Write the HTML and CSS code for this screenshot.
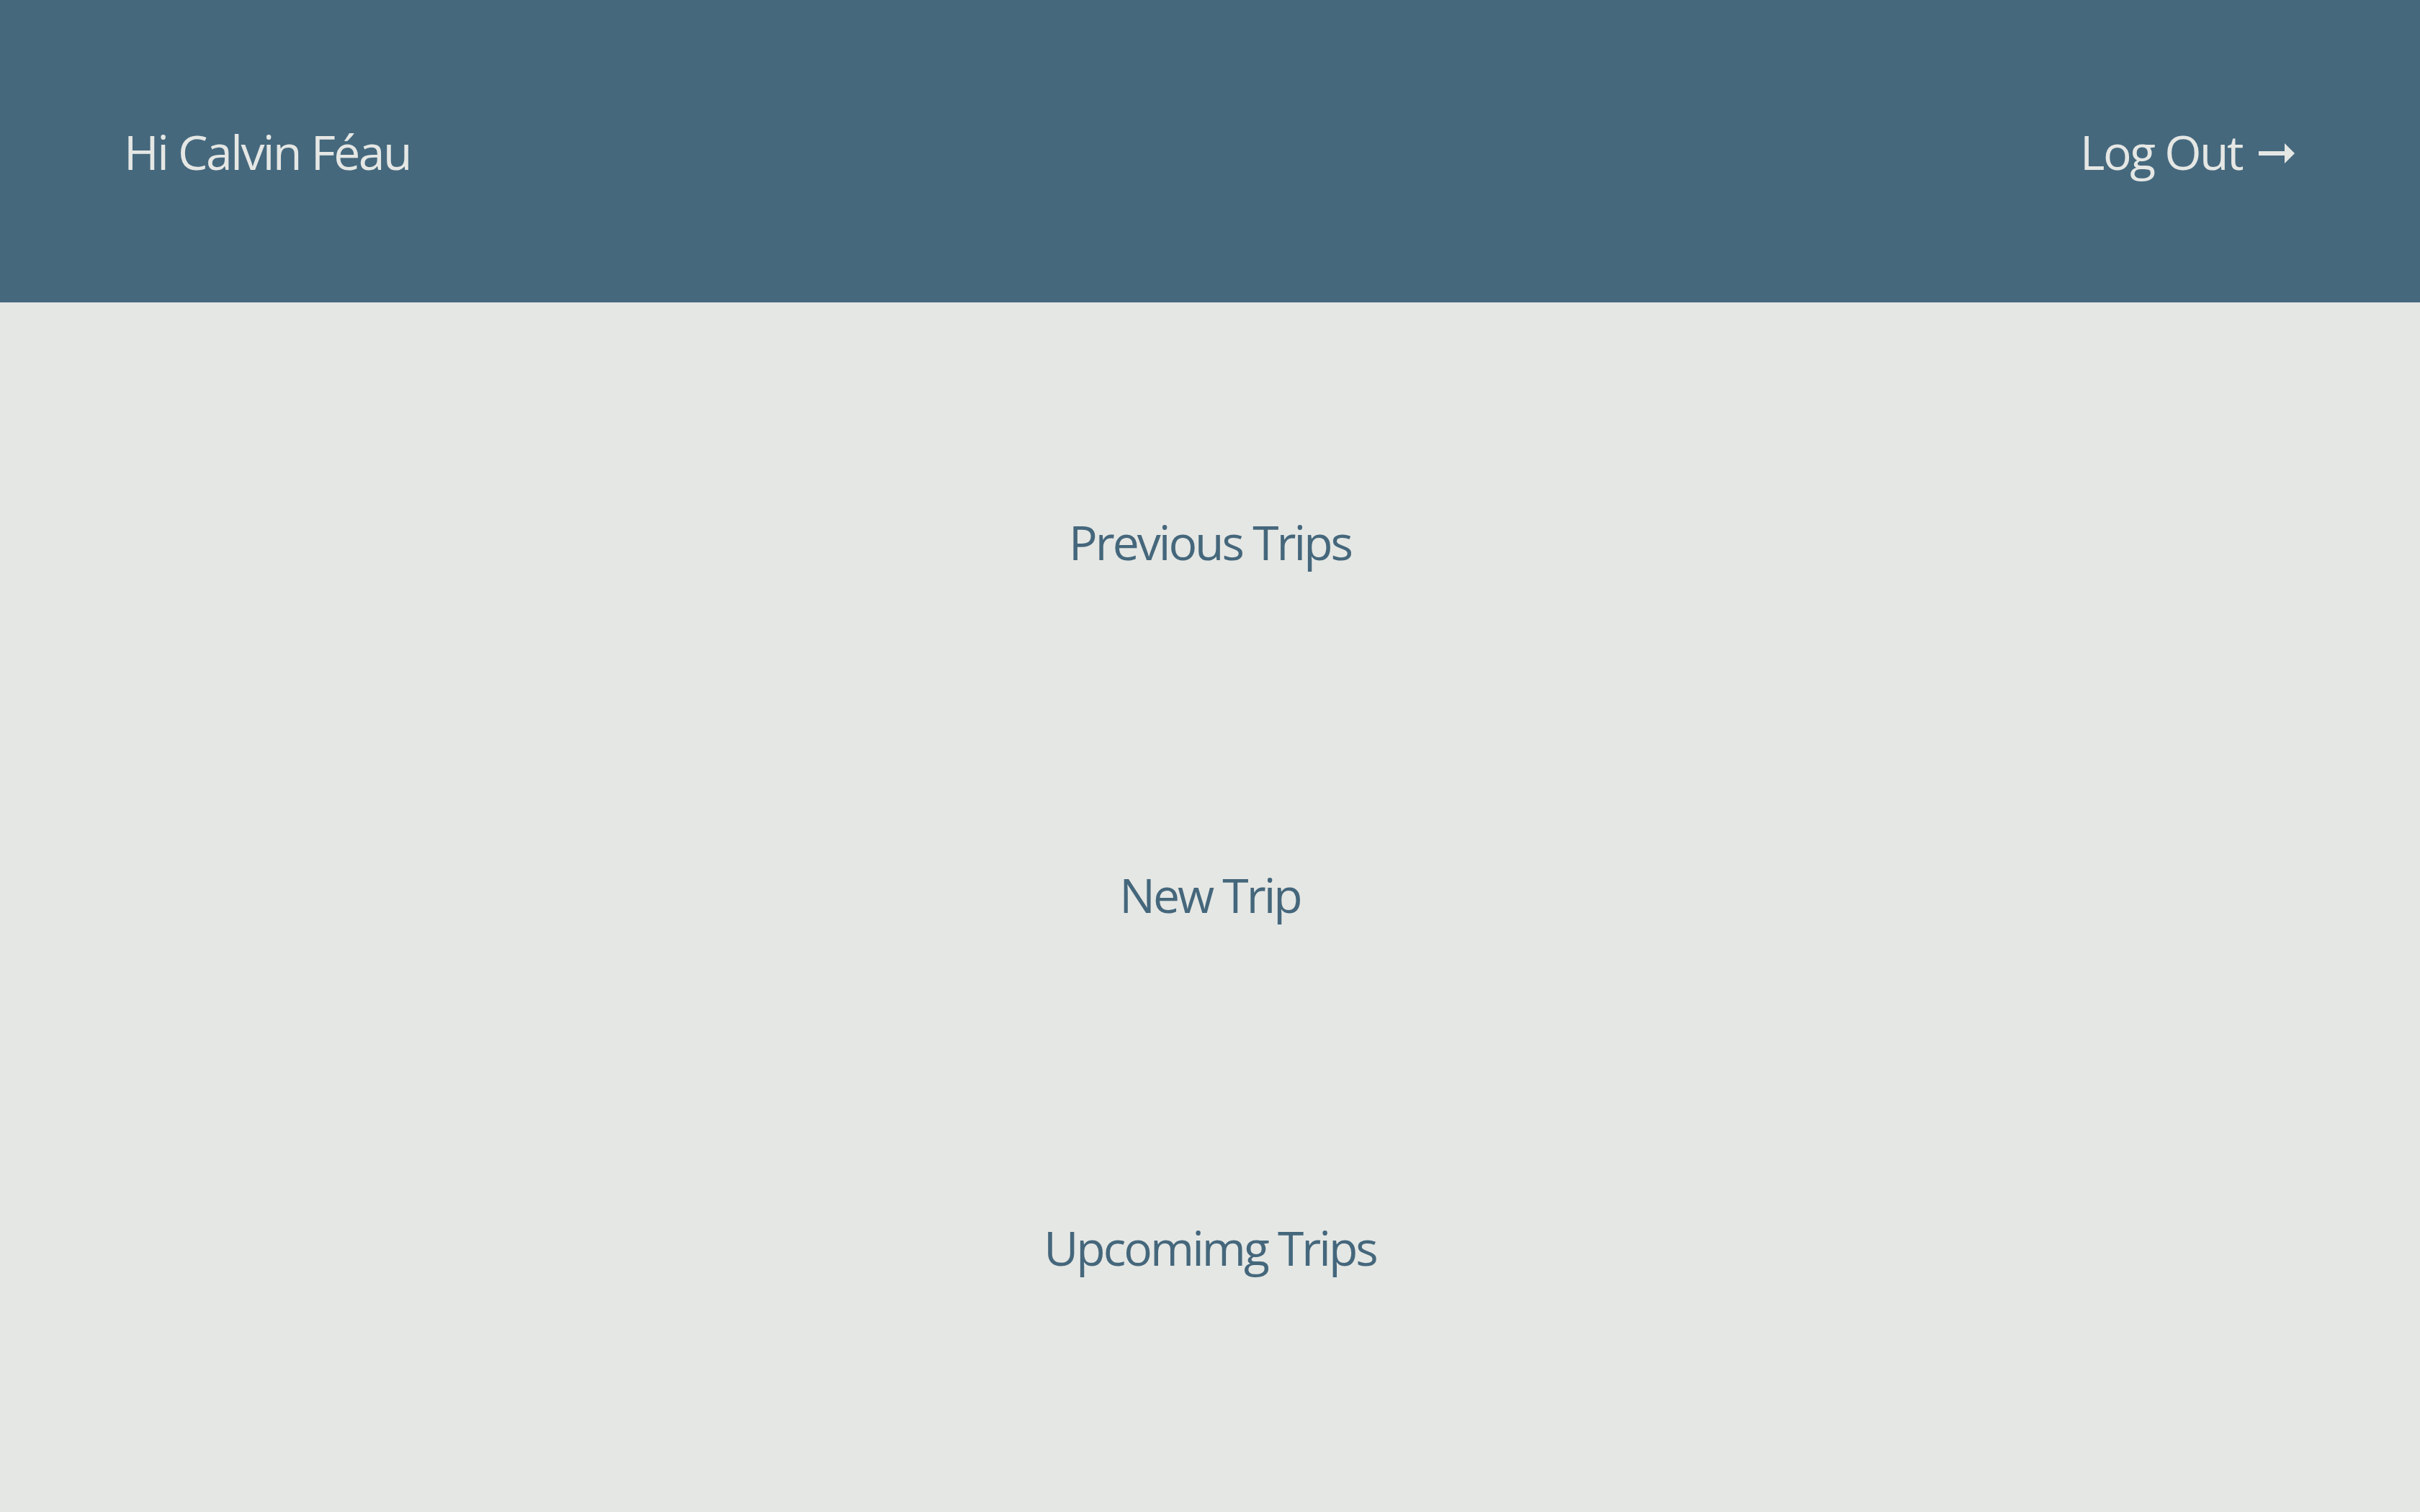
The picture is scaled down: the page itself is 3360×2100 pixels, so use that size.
FILE: index.html
```html
<!DOCTYPE html>
<html lang="en">
<head>
<meta charset="utf-8">
<title>Trips</title>
<link rel="stylesheet" href="styles.css">
</head>
<body>
<header class="topbar">
  <span class="greeting">Hi Calvin Féau</span>
  <a class="logout" href="#">Log Out
    <svg class="arrow" viewBox="0 0 50 28" width="50" height="28" aria-hidden="true">
      <rect x="0" y="11" width="38" height="6" fill="currentColor"/>
      <polygon points="36,0 50,14 36,28" fill="currentColor"/>
    </svg>
  </a>
</header>
<main class="menu">
  <a class="menu-item" href="#">Previous Trips</a>
  <a class="menu-item" href="#">New Trip</a>
  <a class="menu-item" href="#">Upcomimg Trips</a>
</main>
</body>
</html>
```
FILE: styles.css
```css
html, body {
  margin: 0;
  padding: 0;
}
body {
  background: #e5e7e4;
  font-family: "Open Sans", "Noto Sans", sans-serif;
  min-height: 2100px;
}
.topbar {
  height: 420px;
  background: #45687d;
  color: #e5e7e4;
  display: flex;
  align-items: center;
  justify-content: space-between;
  padding: 0 174px 0 172px;
  box-sizing: border-box;
  font-size: 66px;
  line-height: 99px;
  letter-spacing: -2.5px;
}
.greeting {
  display: block;
}
.logout {
  color: #e5e7e4;
  text-decoration: none;
  display: flex;
  align-items: center;
  gap: 23px;
}
.arrow {
  display: block;
  margin-top: 6px;
}
.menu {
  display: flex;
  flex-direction: column;
  align-items: center;
  padding-top: 283px;
  gap: 391px;
}
.menu-item {
  color: #45677c;
  text-decoration: none;
  font-size: 66px;
  line-height: 99px;
  letter-spacing: -3px;
}
```
